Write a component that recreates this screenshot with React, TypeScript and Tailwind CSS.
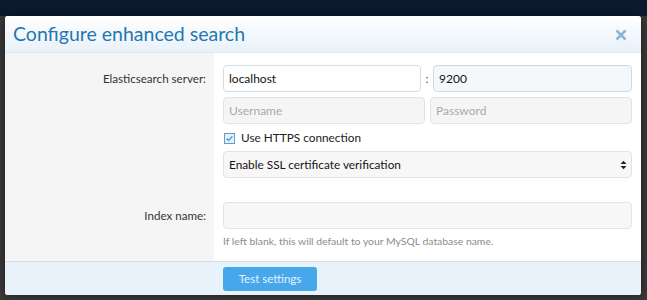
import React from "react";

const font = { fontFamily: 'Lato, "Open Sans", sans-serif' };

export default function App() {
  return (
    <div className="h-[300px] w-[647px] overflow-hidden bg-[#3a3838]" style={font}>
      <div className="h-[16px] bg-[#0b1b2f]" />
      <div className="flex pl-[5px]">
        <div className="w-[636px] overflow-hidden rounded-[3px] bg-white shadow-[0_0_8px_rgba(0,0,0,0.5)]">
          {/* header */}
          <div className="flex h-[37px] items-center justify-between border-b border-[#dfe8f0] bg-gradient-to-b from-white to-[#e8f1fa] pl-[8px] pr-[14px]">
            <h1 className="text-[19.5px] leading-none text-[#2577b1]">Configure enhanced search</h1>
            <svg width="12" height="12" viewBox="0 0 12 12" className="mt-[1px]">
              <path d="M1.5 1.5 L10.5 10.5 M10.5 1.5 L1.5 10.5" stroke="#8ab5d6" strokeWidth="2.6" strokeLinecap="butt" />
            </svg>
          </div>
          {/* row 1 */}
          <div className="flex">
            <div className="w-[209px] shrink-0 bg-[#f5f5f5] pr-[8px] pt-[12px] text-right text-[11.6px] leading-[27px] text-[#333]">
              Elasticsearch server:
            </div>
            <div className="flex flex-1 flex-col py-[12px] pl-[9px] pr-[9px]">
              <div className="flex items-center">
                <div className="flex h-[27px] w-[198px] items-center rounded-[4px] border border-[#cfdeea] bg-white px-[5px] text-[12px] text-[#141414]">
                  localhost
                </div>
                <span className="w-[12px] text-center text-[12px] text-[#555]">:</span>
                <div className="flex h-[27px] flex-1 items-center rounded-[4px] border border-[#c9dbe9] bg-[#f4f8fb] px-[5px] text-[12px] text-[#141414]">
                  9200
                </div>
              </div>
              <div className="mt-[5px] flex gap-[5px]">
                <div className="flex h-[27px] flex-1 items-center rounded-[4px] border border-[#e3e3e3] bg-[#f5f5f5] px-[5px] text-[12px] text-[#aaaaaa]">
                  Username
                </div>
                <div className="flex h-[27px] flex-1 items-center rounded-[4px] border border-[#e3e3e3] bg-[#f5f5f5] px-[5px] text-[12px] text-[#aaaaaa]">
                  Password
                </div>
              </div>
              <div className="mt-[4px] flex h-[20px] items-center">
                <svg width="11" height="11" viewBox="0 0 11 11" className="ml-[1px]">
                  <rect x="0.5" y="0.5" width="10" height="10" fill="#e4f0fa" stroke="#5d9fd3" />
                  <path d="M2.6 5.6 L4.5 7.4 L8.4 3.4" fill="none" stroke="#3f8ac7" strokeWidth="1.2" />
                </svg>
                <span className="ml-[6px] text-[11.8px] text-[#222]">Use HTTPS connection</span>
              </div>
              <div className="mt-[3px] flex h-[27px] items-center justify-between rounded-[4px] border border-[#e3e3e3] bg-[#f7f7f7] pl-[5px] pr-[4px] text-[11.8px] text-[#141414]">
                <span>Enable SSL certificate verification</span>
                <svg width="7" height="10" viewBox="0 0 7 10">
                  <path d="M0.5 4 L3.5 0.8 L6.5 4 Z M0.5 6 L3.5 9.2 L6.5 6 Z" fill="#222" />
                </svg>
              </div>
            </div>
          </div>
          {/* row 2 */}
          <div className="flex">
            <div className="w-[209px] shrink-0 bg-[#f5f5f5] pr-[8px] pt-[12px] text-right text-[11.6px] leading-[27px] text-[#333]">
              Index name:
            </div>
            <div className="flex flex-1 flex-col py-[12px] pl-[9px] pr-[9px]">
              <div className="h-[27px] rounded-[4px] border border-[#e3e3e3] bg-[#f7f7f7]" />
              <div className="mt-[5px] text-[10.4px] leading-[15px] text-[#8c8c8c]">
                If left blank, this will default to your MySQL database name.
              </div>
            </div>
          </div>
          {/* footer */}
          <div className="flex h-[34px] items-center border-t border-[#d8dde2] bg-[#e8f2fb] pl-[218px]">
            <div className="flex h-[24px] w-[94px] items-center justify-center rounded-[3px] bg-[#47a7eb] text-[11.5px] text-[#e4f3fd]">
              Test settings
            </div>
          </div>
        </div>
      </div>
    </div>
  );
}
